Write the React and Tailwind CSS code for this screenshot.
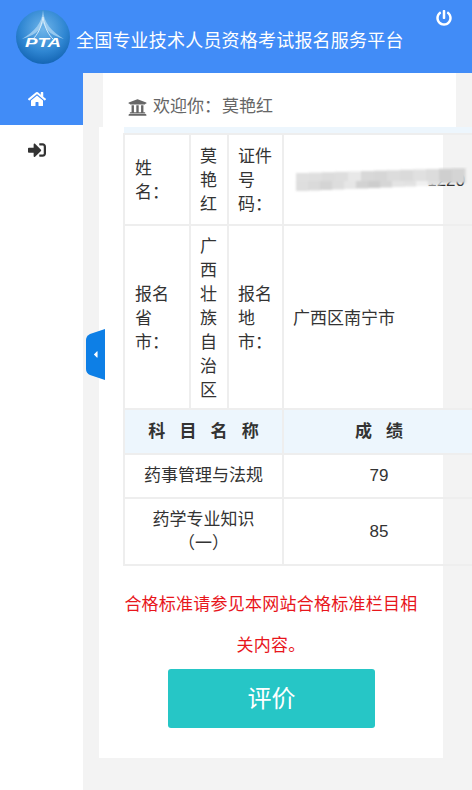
import React from 'react';
import { FaHome, FaSignInAlt, FaUniversity, FaPowerOff, FaCaretLeft } from 'react-icons/fa';

const cellBorder = 'border-2 border-[#eeeeee]';

const Logo = () => (
  <svg width="56" height="56" viewBox="0 0 56 56" className="shrink-0">
    <defs>
      <radialGradient id="ball" cx="50%" cy="35%" r="70%">
        <stop offset="0%" stopColor="#6fb5ea" />
        <stop offset="60%" stopColor="#2f86d2" />
        <stop offset="100%" stopColor="#0f5fae" />
      </radialGradient>
    </defs>
    <circle cx="28" cy="28" r="27" fill="url(#ball)" />
    <path d="M28 1 C27 14 20 22 7 30 C18 27 25 22 28 14 C31 22 38 27 49 30 C36 22 29 14 28 1Z" fill="#a9d3f2" opacity="0.8" />
    <path d="M28 8 C26 20 22 26 18 30 M28 8 C30 20 34 26 38 30" fill="none" stroke="#d5ebfa" strokeWidth="1" />
    <text x="28" y="38" textAnchor="middle" fontFamily="'Liberation Sans', sans-serif" fontSize="13" fontWeight="700" fontStyle="italic" fill="#ffffff" textLength="36" lengthAdjust="spacingAndGlyphs">PTA</text>
  </svg>
);

// blurred redaction over the id number
const Mosaic = () => {
  const top = ['#e0e0e0', '#dfdfdf', '#dcdcdc', '#dedede', '#e8e8e8', '#d8d8d8', '#d6d6d6', '#dcdcdc', '#dadada', '#e0e0e0', '#dcdcdc', '#cfcfcf', '#d4d4d4'];
  const bottom = ['#dedede', '#dadada', '#d4d4d4', '#dddddd', '#e6e6e6', '#d2d2d2', '#cdcdcd', '#d6d6d6', '#e4e4e4', '#e2e2e2', '#f0f0f0', '#e0e0e0'];
  return (
    <svg width="178" height="26" viewBox="0 0 178 26" className="absolute left-[9px] top-[32px]">
      <g style={{ filter: 'blur(0.8px)' }}>
        {top.map((c, i) => (
          <rect key={i} x={i * 13 + 3} y={6 - i * 0.4} width="13.5" height={10 + i * 0.4} fill={c} />
        ))}
        {bottom.map((c, i) => (
          <rect key={i} x={i * 12 + 3} y="14" width="12.5" height={10 - i * 0.5} fill={c} />
        ))}
      </g>
    </svg>
  );
};

export default function App() {
  return (
    <div className="w-[472px] h-[790px] overflow-hidden bg-[#f3f3f3] text-[#333333] font-['Liberation_Sans','Noto_Sans_CJK_SC',sans-serif]">
      <header className="relative h-[73px] bg-[#418cf7] flex items-center pl-[15px]">
        <Logo />
        <h1 className="ml-[5px] mt-[10px] text-[18px] tracking-[0.2px] font-normal text-white whitespace-nowrap">
          全国专业技术人员资格考试报名服务平台
        </h1>
        <FaPowerOff className="absolute right-[20px] top-[10px] text-white" size={16} />
      </header>

      <div className="flex h-[717px]">
        <aside className="w-[83px] shrink-0 bg-white">
          <div className="h-[52px] bg-[#418cf7] flex items-center justify-center pr-[10px]">
            <FaHome className="text-white" size={18} />
          </div>
          <div className="h-[50px] flex items-center justify-center pr-[10px]">
            <FaSignInAlt className="text-[#333333]" size={18} />
          </div>
        </aside>

        <main className="relative flex-1">
          <div className="ml-[20px] w-[353px] h-[54px] bg-white flex items-center pl-[25px] pt-[14px] text-[17px] text-[#666666]">
            <FaUniversity size={19} className="mr-[6px] text-[#666666]" />
            <span>欢迎你：</span>
            <span className="ml-[1px]">莫艳红</span>
          </div>

          <section className="ml-[16px] w-[344px] h-[631px] bg-white">
            <div className="pl-[24px]">
              <table className="table-fixed border-collapse w-[351px] text-[17px] leading-[24px]">
                <colgroup>
                  <col className="w-[66px]" />
                  <col className="w-[38px]" />
                  <col className="w-[55px]" />
                  <col className="w-[192px]" />
                </colgroup>
                <tbody>
                  <tr className="h-[7px]">
                    <td colSpan={4} className="bg-[#edf6fd] p-0"></td>
                  </tr>
                  <tr className="h-[91px]">
                    <td className={`${cellBorder} px-[10px] pt-[3px]`}>姓名：</td>
                    <td className={`${cellBorder} px-[9px] pt-[3px]`}>莫艳红</td>
                    <td className={`${cellBorder} px-[9px] pt-[3px]`}>证件号码：</td>
                    <td className={`${cellBorder} px-[9px] relative`}>
                      <span className="absolute right-[9px] top-[34px]">1220</span>
                      <Mosaic />
                    </td>
                  </tr>
                  <tr className="h-[184px]">
                    <td className={`${cellBorder} px-[10px] pt-[3px]`}>报名省市：</td>
                    <td className={`${cellBorder} px-[9px] pt-[3px]`}>广西壮族自治区</td>
                    <td className={`${cellBorder} px-[9px] pt-[3px]`}>报名地市：</td>
                    <td className={`${cellBorder} px-[9px] pt-[3px]`}>广西区南宁市</td>
                  </tr>
                  <tr className="h-[45px] bg-[#edf6fd] font-bold text-center">
                    <td colSpan={3} className={`${cellBorder} whitespace-pre`}>科   目   名   称</td>
                    <td className={`${cellBorder} whitespace-pre`}>成   绩</td>
                  </tr>
                  <tr className="h-[44px] text-center">
                    <td colSpan={3} className={cellBorder}>药事管理与法规</td>
                    <td className={cellBorder}>79</td>
                  </tr>
                  <tr className="h-[67px] text-center">
                    <td colSpan={3} className={`${cellBorder} px-[10px]`}>药学专业知识（一）</td>
                    <td className={cellBorder}>85</td>
                  </tr>
                </tbody>
              </table>
            </div>

            <p className="mt-[18px] px-[24px] text-[17px] tracking-[0.25px] leading-[41px] text-center text-[#e8161c]">
              合格标准请参见本网站合格标准栏目相关内容。
            </p>

            <div className="flex justify-center pl-[1px] mt-[3px]">
              <button className="w-[207px] h-[59px] rounded-[3px] bg-[#26c6c6] text-white text-[24px]">评价</button>
            </div>
          </section>

          <button className="absolute left-[3px] top-[256px] w-[19px] h-[51px] flex items-center justify-center text-white">
            <svg width="19" height="51" viewBox="0 0 19 51" className="absolute inset-0">
              <path d="M19 0 V51 L4 46 Q0 44 0 40 V11 Q0 7 4 5 Z" fill="#0d7fe6" />
            </svg>
            <FaCaretLeft size={11} className="relative" />
          </button>
        </main>
      </div>
    </div>
  );
}
